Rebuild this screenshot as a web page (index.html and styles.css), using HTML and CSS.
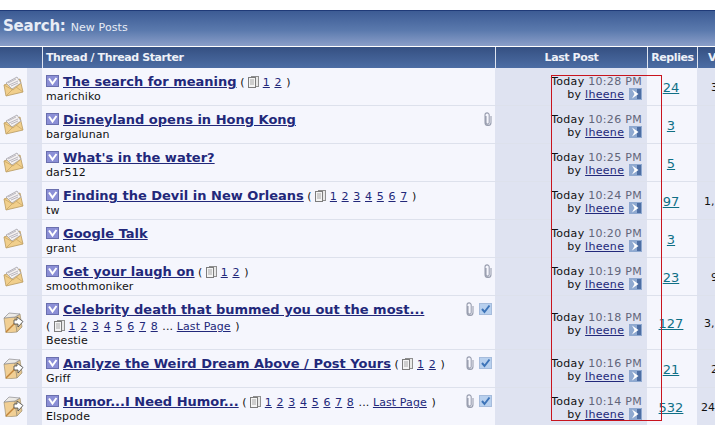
FILE: index.html
```html
<!DOCTYPE html>
<html lang="en">
<head>
<meta charset="utf-8">
<title>Search: New Posts</title>
<link rel="stylesheet" href="styles.css">
</head>
<body>
<svg class="defs" width="0" height="0" aria-hidden="true">
  <defs>
    <symbol id="env" viewBox="0 0 21 21">
      <path d="M1 9 L17 3 L20 16 L3 20 Z" fill="#f1cf8c" stroke="#b8995e" stroke-width=".8"/>
      <path d="M3 7 L14 1 L18 7 L9 13 Z" fill="#f4f1f0" stroke="#9a98a0" stroke-width=".7"/>
      <path d="M5 7 L13 3 M6 9 L15 5 M8 10 L15 7" stroke="#a9a7b4" stroke-width=".8"/>
      <path d="M1 9 L10 14 L17 8 M3 20 L10 13 M20 16 L13 11" fill="none" stroke="#c9a666" stroke-width=".8"/>
    </symbol>
    <symbol id="box" viewBox="0 0 21 21">
      <path d="M1 6 L12 5 L14 20 L3 21 Z" fill="#f1cf94" stroke="#a09274" stroke-width=".7"/>
      <path d="M12 5 L17 2 L19 15 L14 20 Z" fill="#e2c48e" stroke="#a09274" stroke-width=".7"/>
      <path d="M1 6 L6 1 L17 2 L12 5 Z" fill="#eceae6" stroke="#8d8d90" stroke-width=".7"/>
      <path d="M3 20 L14 9" stroke="#c2843a" stroke-width="1.500"/>
      <path d="M14 5 L20 9.500 L15 15 L15 12 L11 12 L11 8 L14 8 Z" fill="#fff" stroke="#444" stroke-width=".8"/>
    </symbol>
    <symbol id="chk" viewBox="0 0 13 12">
      <rect x=".5" y=".5" width="12" height="11" fill="#8b8fd6" stroke="#6a6fae"/>
      <path d="M3 3.500 L6.500 8.500 L10.500 3" fill="none" stroke="#fff" stroke-width="2"/>
    </symbol>
    <symbol id="tick" viewBox="0 0 13 12">
      <rect x=".5" y=".5" width="12" height="11" fill="#b8d0ee" stroke="#a6bcdc"/>
      <path d="M3 6 L5.500 9 L10.500 2.500" fill="none" stroke="#3d74b8" stroke-width="2"/>
    </symbol>
    <symbol id="clip" viewBox="0 0 9 14">
      <path d="M3 4 V10.500 A1.600 1.600 0 0 0 6.200 10.500 V3 A2 2 0 0 0 2 3 V10.500 A3 3 0 0 0 8 10.500 V4" fill="none" stroke="#9a9fb0" stroke-width="1.100"/>
    </symbol>
    <symbol id="go" viewBox="0 0 13 12">
      <rect width="13" height="12" fill="#8fa9d0"/>
      <rect x="8" y="1" width="4" height="10" fill="#4d6ea3"/>
      <path d="M3 1.500 L9.500 6 L3 10.500 L5.500 6 Z" fill="#fff"/>
    </symbol>
    <symbol id="pg" viewBox="0 0 11 12">
      <rect x="3.500" y=".5" width="7" height="10" fill="#e9e9e9" stroke="#8f8f8f"/>
      <rect x=".5" y="1.500" width="7" height="10" fill="#f4f4f4" stroke="#7c7c7c"/>
      <path d="M2 4 H6 M2 6 H6 M2 8 H6" stroke="#a8a8a8"/>
    </symbol>
  </defs>
</svg>

<main class="page">
  <h1 class="banner"><span class="banner-big">Search:</span> <span class="banner-small">New Posts</span></h1>
  <table class="threads">
    <colgroup>
      <col class="c-status"><col class="c-prefix"><col class="c-thread"><col class="c-last"><col class="c-replies"><col class="c-views">
    </colgroup>
    <thead>
      <tr>
        <th colspan="2"></th>
        <th class="th-left">Thread / Thread Starter</th>
        <th>Last Post</th>
        <th>Replies</th>
        <th class="th-left th-views">Views</th>
      </tr>
    </thead>
    <tbody>
      <tr>
        <td class="alt1 status"><svg class="i-status"><use href="#env"/></svg></td><td class="alt2"></td>
        <td class="alt1 thread">
          <div class="flags"></div>
          <div class="title-line"><svg class="i-chk"><use href="#chk"/></svg><a class="title" href="#">The search for meaning</a> <span class="pages">( <svg class="i-pg"><use href="#pg"/></svg> <a href="#">1</a> <a href="#">2</a> )</span></div>
          <div class="starter">marichiko</div>
        </td>
        <td class="alt2 last"><div class="when">Today <span class="time">10:28 PM</span></div><div class="by">by <a href="#">lheene</a> <svg class="i-go"><use href="#go"/></svg></div></td>
        <td class="alt1 replies"><a href="#">24</a></td>
        <td class="alt2 views">3</td>
      </tr>
      <tr>
        <td class="alt1 status"><svg class="i-status"><use href="#env"/></svg></td><td class="alt2"></td>
        <td class="alt1 thread">
          <div class="flags"><svg class="i-clip"><use href="#clip"/></svg></div>
          <div class="title-line"><svg class="i-chk"><use href="#chk"/></svg><a class="title" href="#">Disneyland opens in Hong Kong</a></div>
          <div class="starter">bargalunan</div>
        </td>
        <td class="alt2 last"><div class="when">Today <span class="time">10:26 PM</span></div><div class="by">by <a href="#">lheene</a> <svg class="i-go"><use href="#go"/></svg></div></td>
        <td class="alt1 replies"><a href="#">3</a></td>
        <td class="alt2 views"></td>
      </tr>
      <tr>
        <td class="alt1 status"><svg class="i-status"><use href="#env"/></svg></td><td class="alt2"></td>
        <td class="alt1 thread">
          <div class="flags"></div>
          <div class="title-line"><svg class="i-chk"><use href="#chk"/></svg><a class="title" href="#">What's in the water?</a></div>
          <div class="starter">dar512</div>
        </td>
        <td class="alt2 last"><div class="when">Today <span class="time">10:25 PM</span></div><div class="by">by <a href="#">lheene</a> <svg class="i-go"><use href="#go"/></svg></div></td>
        <td class="alt1 replies"><a href="#">5</a></td>
        <td class="alt2 views"></td>
      </tr>
      <tr>
        <td class="alt1 status"><svg class="i-status"><use href="#env"/></svg></td><td class="alt2"></td>
        <td class="alt1 thread">
          <div class="flags"></div>
          <div class="title-line"><svg class="i-chk"><use href="#chk"/></svg><a class="title" href="#">Finding the Devil in New Orleans</a> <span class="pages">( <svg class="i-pg"><use href="#pg"/></svg> <a href="#">1</a> <a href="#">2</a> <a href="#">3</a> <a href="#">4</a> <a href="#">5</a> <a href="#">6</a> <a href="#">7</a> )</span></div>
          <div class="starter">tw</div>
        </td>
        <td class="alt2 last"><div class="when">Today <span class="time">10:24 PM</span></div><div class="by">by <a href="#">lheene</a> <svg class="i-go"><use href="#go"/></svg></div></td>
        <td class="alt1 replies"><a href="#">97</a></td>
        <td class="alt2 views v-wide">1,</td>
      </tr>
      <tr>
        <td class="alt1 status"><svg class="i-status"><use href="#env"/></svg></td><td class="alt2"></td>
        <td class="alt1 thread">
          <div class="flags"></div>
          <div class="title-line"><svg class="i-chk"><use href="#chk"/></svg><a class="title" href="#">Google Talk</a></div>
          <div class="starter">grant</div>
        </td>
        <td class="alt2 last"><div class="when">Today <span class="time">10:20 PM</span></div><div class="by">by <a href="#">lheene</a> <svg class="i-go"><use href="#go"/></svg></div></td>
        <td class="alt1 replies"><a href="#">3</a></td>
        <td class="alt2 views"></td>
      </tr>
      <tr>
        <td class="alt1 status"><svg class="i-status"><use href="#env"/></svg></td><td class="alt2"></td>
        <td class="alt1 thread">
          <div class="flags"><svg class="i-clip"><use href="#clip"/></svg></div>
          <div class="title-line"><svg class="i-chk"><use href="#chk"/></svg><a class="title" href="#">Get your laugh on</a> <span class="pages">( <svg class="i-pg"><use href="#pg"/></svg> <a href="#">1</a> <a href="#">2</a> )</span></div>
          <div class="starter">smoothmoniker</div>
        </td>
        <td class="alt2 last"><div class="when">Today <span class="time">10:19 PM</span></div><div class="by">by <a href="#">lheene</a> <svg class="i-go"><use href="#go"/></svg></div></td>
        <td class="alt1 replies"><a href="#">23</a></td>
        <td class="alt2 views">9</td>
      </tr>
      <tr class="tall">
        <td class="alt1 status"><svg class="i-status"><use href="#box"/></svg></td><td class="alt2"></td>
        <td class="alt1 thread">
          <div class="flags"><svg class="i-clip"><use href="#clip"/></svg><svg class="i-tick"><use href="#tick"/></svg></div>
          <div class="title-line"><svg class="i-chk"><use href="#chk"/></svg><a class="title" href="#">Celebrity death that bummed you out the most...</a></div>
          <div class="pages-line"><span class="pages">( <svg class="i-pg"><use href="#pg"/></svg> <a href="#">1</a> <a href="#">2</a> <a href="#">3</a> <a href="#">4</a> <a href="#">5</a> <a href="#">6</a> <a href="#">7</a> <a href="#">8</a> ... <a href="#">Last Page</a> )</span></div>
          <div class="starter">Beestie</div>
        </td>
        <td class="alt2 last"><div class="when">Today <span class="time">10:18 PM</span></div><div class="by">by <a href="#">lheene</a> <svg class="i-go"><use href="#go"/></svg></div></td>
        <td class="alt1 replies"><a href="#">127</a></td>
        <td class="alt2 views v-wide">3,</td>
      </tr>
      <tr>
        <td class="alt1 status"><svg class="i-status"><use href="#box"/></svg></td><td class="alt2"></td>
        <td class="alt1 thread">
          <div class="flags"><svg class="i-clip"><use href="#clip"/></svg><svg class="i-tick"><use href="#tick"/></svg></div>
          <div class="title-line"><svg class="i-chk"><use href="#chk"/></svg><a class="title" href="#">Analyze the Weird Dream Above / Post Yours</a> <span class="pages">( <svg class="i-pg"><use href="#pg"/></svg> <a href="#">1</a> <a href="#">2</a> )</span></div>
          <div class="starter">Griff</div>
        </td>
        <td class="alt2 last"><div class="when">Today <span class="time">10:16 PM</span></div><div class="by">by <a href="#">lheene</a> <svg class="i-go"><use href="#go"/></svg></div></td>
        <td class="alt1 replies"><a href="#">21</a></td>
        <td class="alt2 views">2</td>
      </tr>
      <tr>
        <td class="alt1 status"><svg class="i-status"><use href="#box"/></svg></td><td class="alt2"></td>
        <td class="alt1 thread">
          <div class="flags"><svg class="i-clip"><use href="#clip"/></svg><svg class="i-tick"><use href="#tick"/></svg></div>
          <div class="title-line"><svg class="i-chk"><use href="#chk"/></svg><a class="title" href="#">Humor...I Need Humor...</a> <span class="pages">( <svg class="i-pg"><use href="#pg"/></svg> <a href="#">1</a> <a href="#">2</a> <a href="#">3</a> <a href="#">4</a> <a href="#">5</a> <a href="#">6</a> <a href="#">7</a> <a href="#">8</a> ... <a href="#">Last Page</a> )</span></div>
          <div class="starter">Elspode</div>
        </td>
        <td class="alt2 last"><div class="when">Today <span class="time">10:14 PM</span></div><div class="by">by <a href="#">lheene</a> <svg class="i-go"><use href="#go"/></svg></div></td>
        <td class="alt1 replies"><a href="#">532</a></td>
        <td class="alt2 views v-far">24</td>
      </tr>
    </tbody>
  </table>
  <div class="highlight" aria-hidden="true"></div>
</main>
</body>
</html>
```

FILE: styles.css
```css
html, body {
  margin: 0;
  padding: 0;
  background: #fff;
  overflow: hidden;
}
.defs { position: absolute; }
.page {
  position: relative;
  width: 715px;
  height: 425px;
  overflow: hidden;
  padding-top: 10px;
  box-sizing: border-box;
  font-family: "DejaVu Sans", Verdana, sans-serif;
  font-size: 11px;
  color: #111;
}
.banner {
  margin: 0;
  height: 36px;
  width: 760px;
  box-sizing: border-box;
  border-top: 1px solid #1f3a78;
  padding: 3px 0 0 3px;
  font-weight: normal;
  line-height: 20px;
  color: #e8edf6;
  background: linear-gradient(#3c5b94, #5a79ad 55%, #8b9fc9);
  white-space: nowrap;
}
.banner-big { font-size: 15px; font-weight: bold; letter-spacing: -.2px; }
.banner-small { font-size: 11px; margin-left: -2px; letter-spacing: .1px; }
.threads {
  border-collapse: separate;
  border-spacing: 0;
  table-layout: fixed;
  width: 760px;
  margin-top: 1px;
}
.c-status { width: 27px; }
.c-prefix { width: 15px; }
.c-thread { width: 453px; }
.c-last { width: 152px; }
.c-replies { width: 50px; }
.c-views { width: 63px; }
th {
  height: 21px;
  padding: 0 2px;
  box-sizing: border-box;
  font-size: 11px;
  font-weight: bold;
  letter-spacing: -.4px;
  color: #eef1f8;
  background: linear-gradient(#355082, #4c6da4);
  border-left: 1px solid #dfe5f0;
  white-space: nowrap;
  overflow: hidden;
}
th:first-child { border-left: 0; }
.th-left { text-align: left; padding-left: 3px; }
.th-views { padding-left: 10px; }
td {
  padding: 0;
  box-sizing: border-box;
  height: 38px;
  border-bottom: 1px solid #dde1ec;
  vertical-align: middle;
  overflow: hidden;
}
.tall td { height: 54px; }
.alt1 { background: #f5f6fd; }
.alt2 { background: #dfe3f1; }
.i-status { display: block; width: 21px; height: 21px; margin: 0 0 0 3px; }
.thread {
  padding: 6px 3px 0 4px;
  white-space: nowrap;
  vertical-align: top;
}
.flags {
  float: right;
  display: flex;
  gap: 5px;
  align-items: center;
  margin-top: 0;
}
.i-clip { width: 9px; height: 14px; }
.i-tick { width: 13px; height: 12px; }
.title-line { height: 16px; line-height: 16px; }
.i-chk { width: 13px; height: 12px; margin-right: 4px; vertical-align: -1px; }
.title {
  font-size: 13px;
  font-weight: bold;
  color: #22287a;
}
.pages { font-size: 11px; letter-spacing: .1px; }
.pages-line { height: 14px; line-height: 14px; margin-top: 2px; }
.pages a { color: #22287a; margin-right: 1px; }
.i-pg { width: 11px; height: 12px; vertical-align: -2px; }
.starter { line-height: 13px; color: #111; letter-spacing: .12px; }
.last {
  text-align: right;
  padding: 2px 5px 0 0;
  white-space: nowrap;
  letter-spacing: .3px;
}
.when, .by { height: 13px; line-height: 13px; }
.time { color: #62657a; }
.by a { color: #22287a; }
.i-go { width: 13px; height: 12px; vertical-align: -2px; margin-left: 1px; }
.replies { text-align: center; font-size: 13px; padding: 2px 2px 0 0; }
.replies a { color: #0f6f86; }
.views { padding: 2px 0 0 14px; font-size: 11px; white-space: nowrap; }
.views.v-wide { padding-left: 7px; }
.views.v-far { padding-left: 4px; }
.highlight {
  position: absolute;
  left: 551px;
  top: 75px;
  width: 109px;
  height: 344px;
  border: 1px solid #c8141e;
}
```
